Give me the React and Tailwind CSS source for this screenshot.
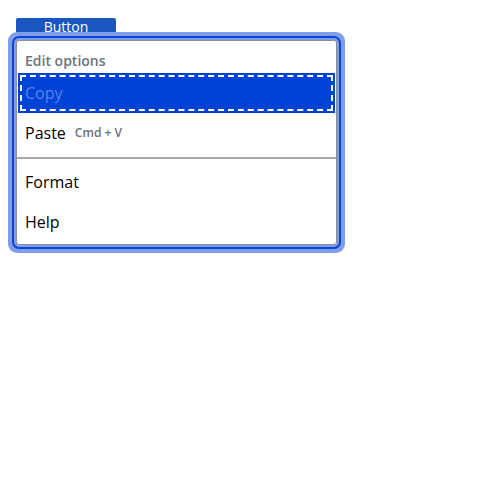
import React from 'react';

const App = () => {
  return (
    <div className="relative w-[500px] h-[500px] bg-white font-['Open_Sans',sans-serif]">
      <button className="absolute left-4 top-[18px] w-[100px] h-[22px] rounded-t-[2px] bg-[#1a56c0] text-white text-sm leading-[18px] font-medium flex justify-center">
        Button
      </button>

      {/* Menu */}
      <div className="absolute left-4 top-10 w-[321px] bg-white border border-[#8a8f98] rounded-[3px] outline-2 outline-[#0a45d8] outline-offset-2 shadow-[0_0_0_8px_#7f9de9] px-px pb-[2px]">
        <div className="h-8 pt-[10px] px-[7px] text-sm font-semibold text-[#6b7280] leading-5">
          Edit options
        </div>
        <div className="h-10 flex items-center px-[7px] bg-[#0043d6] text-[#5b80e6] text-base outline-2 outline-dashed outline-white -outline-offset-4">
          Copy
        </div>
        <div className="h-10 flex items-center px-[7px] text-base text-black">
          Paste
          <span className="ml-[9px] text-xs font-semibold text-[#6b7280]">Cmd + V</span>
        </div>
        <div className="mt-1 mb-[3px] -mx-px h-[2px] bg-[#a5a8ae]" />
        <div className="h-10 flex items-center px-[7px] text-base text-black">
          Format
        </div>
        <div className="h-10 flex items-center px-[7px] text-base text-black">
          Help
        </div>
      </div>
    </div>
  );
};

export default App;
